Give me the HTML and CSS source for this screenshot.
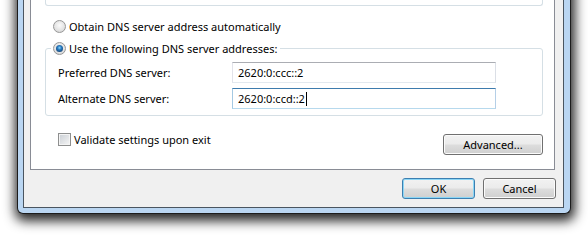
FILE: index.html
```html
<!DOCTYPE html>
<html lang="en">
<head>
    <meta charset="UTF-8">
    <title>DNS server addresses</title>
    <link rel="stylesheet" href="styles.css">
</head>
<body>
    <div class="window">
        <div class="client">
            <div class="panel">
                <div class="group-top"></div>

                <label class="option"><span class="radio"></span>Obtain DNS server address automatically</label>

                <fieldset class="group">
                    <legend class="option"><span class="radio checked"></span>Use the following DNS server addresses:</legend>
                    <div class="field">
                        <span class="field-label">Preferred DNS server:</span>
                        <div class="textbox">2620:0:ccc::2</div>
                    </div>
                    <div class="field">
                        <span class="field-label">Alternate DNS server:</span>
                        <div class="textbox focused">2620:0:ccd::2<span class="caret"></span></div>
                    </div>
                </fieldset>

                <div class="panel-foot">
                    <label class="check-row"><span class="checkbox"></span>Validate settings upon exit</label>
                    <button class="btn advanced">Advanced...</button>
                </div>
            </div>

            <div class="actions">
                <button class="btn default">OK</button>
                <button class="btn">Cancel</button>
            </div>
        </div>
    </div>
</body>
</html>
```

FILE: styles.css
```css
* {
    margin: 0;
    padding: 0;
    box-sizing: border-box;
}
body {
    font-family: 'Noto Sans', 'Open Sans', sans-serif;
    font-size: 11px;
    color: #000;
    background: #fff;
    height: 242px;
    overflow: hidden;
}
.window {
    width: 554px;
    margin: -24px 0 0 17px;
    padding: 0 6px 5px 5px;
    background: #bad6f2;
    border: 1px solid #1c1c1c;
    border-top: 0;
    border-radius: 0 0 6px 6px;
    box-shadow: 1px 4px 12px 3px rgba(0, 0, 0, 0.85);
}
.client {
    background: #f0f0f0;
    border: 1px solid #4a5560;
    border-top: 0;
    padding: 0 8px 0 6px;
}
.panel {
    background: #fff;
    border: 1px solid #898c95;
    border-top: 0;
}
.group-top {
    height: 30px;
    margin: 0 11px 0 14px;
    border: 1px solid #d5dfe5;
    border-top: 0;
    border-radius: 0 0 3px 3px;
}
.option {
    display: flex;
    align-items: center;
    height: 17px;
    line-height: 17px;
    white-space: nowrap;
}
.panel > .option {
    margin-top: 12px;
    padding-left: 22px;
}
.radio {
    width: 13px;
    height: 13px;
    margin-right: 3px;
    border-radius: 50%;
    border: 1px solid #979797;
    background: radial-gradient(circle at 50% 40%, #fbfbfb, #e2e2e2 60%, #c9c9c9);
    display: flex;
    align-items: center;
    justify-content: center;
}
.radio.checked::after {
    content: "";
    width: 7px;
    height: 7px;
    border-radius: 50%;
    background: radial-gradient(circle at 50% 40%, #8ad8fb 0, #2a7cc2 35%, #0b2a52 100%);
}
.group {
    margin: 5px 11px 0 14px;
    padding: 5px 12px 6px;
    border: 1px solid #d5dfe5;
    border-radius: 3px;
}
.group legend {
    margin-left: -7px;
    padding: 0 3px 0 2px;
}
.field {
    display: flex;
    align-items: center;
    height: 21px;
}
.field + .field {
    margin-top: 5px;
}
.field-label {
    width: 174px;
}
.textbox {
    width: 264px;
    height: 21px;
    padding-left: 5px;
    line-height: 19px;
    background: #fff;
    border: 1px solid;
    border-color: #abadb3 #dbdfe6 #e3e9ef #e2e3ea;
    display: flex;
    align-items: center;
}
.textbox.focused {
    border-color: #3d7bad #b5cfe7 #b7d9ed #a4c9e3;
}
.caret {
    width: 1px;
    height: 14px;
    margin-left: 1px;
    background: #000;
}
.panel-foot {
    display: flex;
    justify-content: space-between;
    align-items: flex-start;
    margin-top: 17px;
    padding: 0 11px 14px 27px;
}
.check-row {
    display: flex;
    align-items: center;
    height: 13px;
}
.checkbox {
    width: 13px;
    height: 13px;
    margin-right: 3px;
    border: 1px solid #8e8f8f;
    background: linear-gradient(135deg, #c9ced4, #f6f6f6);
    box-shadow: inset 0 0 0 1px #f4f4f4;
}
.btn {
    font-family: inherit;
    font-size: 11px;
    color: #000;
    height: 21px;
    border: 1px solid #707070;
    border-radius: 3px;
    background: linear-gradient(#f2f2f2, #ebebeb 48%, #dddddd 52%, #cfcfcf);
    box-shadow: inset 0 0 0 1px #fbfbfb;
}
.advanced {
    width: 100px;
    margin-top: 1px;
}
.actions {
    display: flex;
    justify-content: flex-end;
    gap: 8px;
    padding: 8px 0;
    margin-right: -1px;
}
.actions .btn {
    width: 73px;
}
.btn.default {
    border-color: #3c7fb1;
    box-shadow: inset 0 0 0 1px #8cd6f5;
}
```
